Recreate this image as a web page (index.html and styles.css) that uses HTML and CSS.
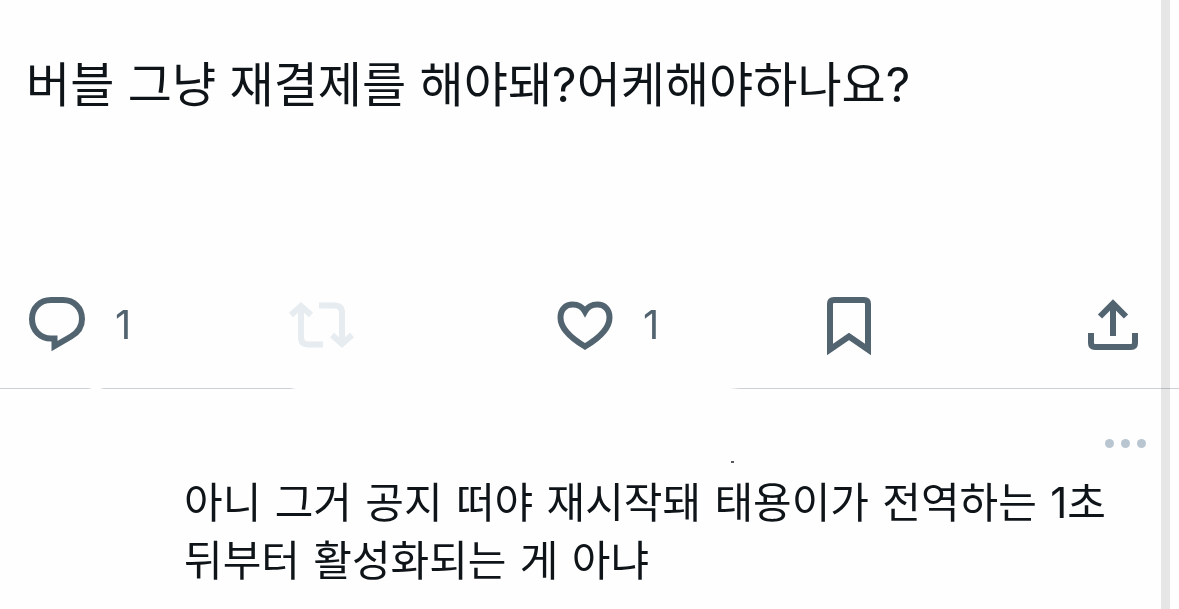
FILE: index.html
```html
<!DOCTYPE html>
<html lang="ko">
<head>
<meta charset="utf-8">
<meta name="viewport" content="width=device-width, initial-scale=1">
<title>버블</title>
<link rel="stylesheet" href="styles.css">
</head>
<body>
<main class="thread">
  <article class="post">
    <p class="post-text">버블 그냥 재결제를 해야돼<span class="latin">?</span>어케해야하나요<span class="latin">?</span></p>
    <div class="actions">
      <button class="action" type="button" aria-label="답글 1">
        <svg class="icon" viewBox="0 0 64 64"><path d="M26 7h12C49 7 57 15 57 26c0 8-4 13.500-11 17.500L29.500 53V45.500H26C15 45.500 7 37 7 26S15 7 26 7z"/></svg>
        <span class="count">1</span>
      </button>
      <button class="action action-off" type="button" aria-label="재게시" disabled>
        <svg class="icon" viewBox="0 0 64 64"><path d="M2 22l10-9 10 9M12 13v31q0 7.500 7.500 7.500H34M30 12.500h15.500q7.500 0 7.500 7.500V51M43 42l10 9 10-9"/></svg>
      </button>
      <button class="action" type="button" aria-label="마음에 들어요 1">
        <svg class="icon" viewBox="0 0 64 64"><path d="M32 53.500C16 44 7.500 35 7.500 24.500 7.500 16 13 11.500 19.500 11.500 25 11.500 29.500 14 32 18.500 34.500 14 39 11.500 44.500 11.500 51 11.500 56.500 16 56.500 24.500 56.500 35 48 44 32 53.500z"/></svg>
        <span class="count">1</span>
      </button>
      <button class="action" type="button" aria-label="북마크">
        <svg class="icon" viewBox="0 0 64 64"><path d="M13 56.500V11q0-4 4-4h30q4 0 4 4V56.500L32 43.500z"/></svg>
      </button>
      <button class="action" type="button" aria-label="공유">
        <svg class="icon" viewBox="0 0 64 64"><path d="M32 43V10M19 23.500L32 10.500l13 13M10 40v10q0 4 4 4h36q4 0 4-4V40"/></svg>
      </button>
    </div>
  </article>
  <div class="divider"></div>
  <article class="reply">
    <div class="reply-head">
      <span class="speck"></span>
      <button class="more" type="button" aria-label="더 보기"><i class="dot"></i><i class="dot"></i><i class="dot"></i></button>
    </div>
    <p class="reply-text">아니 그거 공지 떠야 재시작돼 태용이가 전역하는 <span class="latin">1</span>초 뒤부터 활성화되는 게 아냐</p>
  </article>
</main>
</body>
</html>
```
FILE: styles.css
```css
body {
  margin: 0;
  background: #fefefe;
  color: #0f1419;
  font-family: "Noto Sans CJK KR", sans-serif;
}

p {
  margin: 0;
}

.thread {
  position: relative;
  min-height: 100vh;
}

/* vertical rail along the right edge */
.thread::after {
  content: "";
  position: absolute;
  top: 0;
  bottom: 0;
  right: 9px;
  width: 9px;
  background: #e7e7e7;
  mix-blend-mode: multiply;
}

.latin {
  font-family: Inter, sans-serif;
  line-height: 1;
}

.post {
  padding: 47px 34px 31px 25px;
}

.post-text {
  padding-left: 1px;
  font-size: 48px;
  line-height: 68px;
  word-break: keep-all;
}

.actions {
  display: grid;
  grid-template-columns: repeat(4, 1fr) 64px;
  margin-top: 178px;
}

.action {
  display: flex;
  align-items: center;
  gap: 26px;
  padding: 0;
  border: 0;
  background: none;
  color: #536471;
}

.action-off {
  color: #e6ecf0;
}

.icon {
  flex: none;
  width: 64px;
  height: 64px;
  overflow: visible;
  fill: none;
  stroke: currentColor;
  stroke-width: 6;
}

.count {
  font: 40px/64px Inter, sans-serif;
}

.divider {
  height: 1px;
  background: linear-gradient(to right, #cdd0d6 88px, transparent 92px 100px, #cdd0d6 104px 290px, transparent 296px 730px, #cdd0d6 740px);
}

.reply {
  padding: 49px 32px 16px 184px;
}

.reply-head {
  display: flex;
  justify-content: space-between;
  align-items: flex-start;
}

.speck {
  width: 3px;
  height: 2px;
  margin: 23px 0 0 547px;
  background: #55585c;
}

.more {
  display: flex;
  gap: 7px;
  padding: 1px;
  border: 0;
  background: none;
}

.dot {
  width: 9px;
  height: 9px;
  border-radius: 50%;
  background: #b9c6d2;
}

.reply-text {
  margin-top: 12px;
  font-family: "DejaVu Sans", "Noto Sans CJK KR", sans-serif;
  font-size: 42px;
  line-height: 58px;
  word-break: keep-all;
}
```
